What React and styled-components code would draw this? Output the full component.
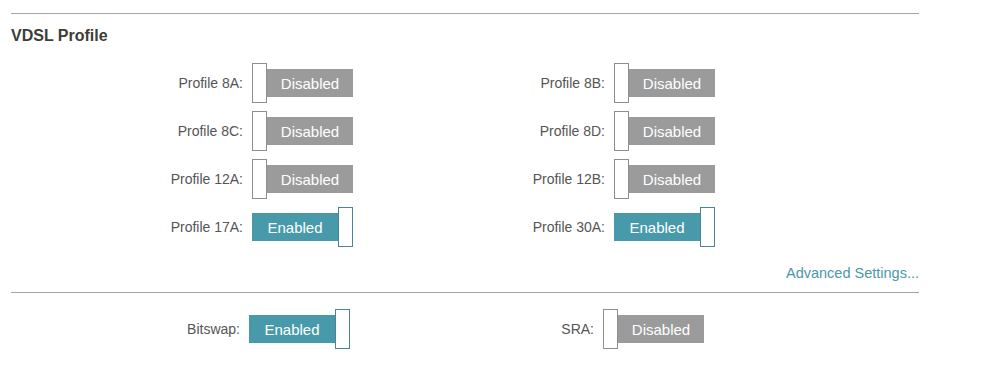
import React from "react";
import styled, { createGlobalStyle } from "styled-components";

const Global = createGlobalStyle`
  html, body { margin: 0; padding: 0; background: #ffffff; }
  body { font-family: "Liberation Sans", Arial, sans-serif; }
`;

const Page = styled.div`
  width: 908px;
  padding: 13px 0 0 11px;
`;

const Divider = styled.hr`
  margin: ${(p) => p.$top || 0}px 0 0 0;
  border: 0;
  border-top: 1px solid #a3a3a3;
  height: 0;
`;

const Title = styled.h2`
  margin: 12px 0 0 0;
  font-size: 16px;
  line-height: 20px;
  font-weight: bold;
  color: #3d3d38;
`;

const Grid = styled.div`
  display: grid;
  grid-template-columns: ${(p) => p.$col}px ${(p) => p.$col}px;
  row-gap: 8px;
  margin-top: ${(p) => p.$top}px;
`;

const Field = styled.div`
  display: flex;
  align-items: center;
  height: 40px;
`;

const Label = styled.span`
  width: ${(p) => p.$w}px;
  text-align: right;
  font-size: 14px;
  color: #555555;
  margin-right: 9px;
`;

const Toggle = styled.div`
  display: flex;
  align-items: center;
  flex-direction: ${(p) => (p.$on ? "row" : "row-reverse")};
  justify-content: flex-end;
  height: 40px;
`;

const Bar = styled.span`
  width: 86px;
  height: 28px;
  display: flex;
  align-items: center;
  justify-content: center;
  background: ${(p) => (p.$on ? "#489aab" : "#9b9b9b")};
  color: #ffffff;
  font-size: 15px;
`;

const Knob = styled.span`
  box-sizing: border-box;
  width: 15px;
  height: 40px;
  background: #ffffff;
  border: 1px solid ${(p) => (p.$on ? "#4a8596" : "#8e8e8e")};
`;

const LinkRow = styled.div`
  display: flex;
  justify-content: flex-end;
  margin-top: 16px;
`;

const Link = styled.a`
  font-size: 14.5px;
  line-height: 21px;
  color: #4a98a8;
  text-decoration: none;
`;

function Switch({ on }) {
  return (
    <Toggle $on={on}>
      <Bar $on={on}>{on ? "Enabled" : "Disabled"}</Bar>
      <Knob $on={on} />
    </Toggle>
  );
}

const profiles = [
  ["Profile 8A:", false],
  ["Profile 8B:", false],
  ["Profile 8C:", false],
  ["Profile 8D:", false],
  ["Profile 12A:", false],
  ["Profile 12B:", false],
  ["Profile 17A:", true],
  ["Profile 30A:", true],
];

const extras = [
  ["Bitswap:", true],
  ["SRA:", false],
];

export default function App() {
  return (
    <>
      <Global />
      <Page>
        <Divider />
        <Title>VDSL Profile</Title>
        <Grid $col={362} $top={17}>
          {profiles.map(([label, on]) => (
            <Field key={label}>
              <Label $w={232}>{label}</Label>
              <Switch on={on} />
            </Field>
          ))}
        </Grid>
        <LinkRow>
          <Link href="#">Advanced Settings...</Link>
        </LinkRow>
        <Divider $top={8} />
        <Grid $col={354} $top={16}>
          {extras.map(([label, on]) => (
            <Field key={label}>
              <Label $w={229}>{label}</Label>
              <Switch on={on} />
            </Field>
          ))}
        </Grid>
      </Page>
    </>
  );
}
